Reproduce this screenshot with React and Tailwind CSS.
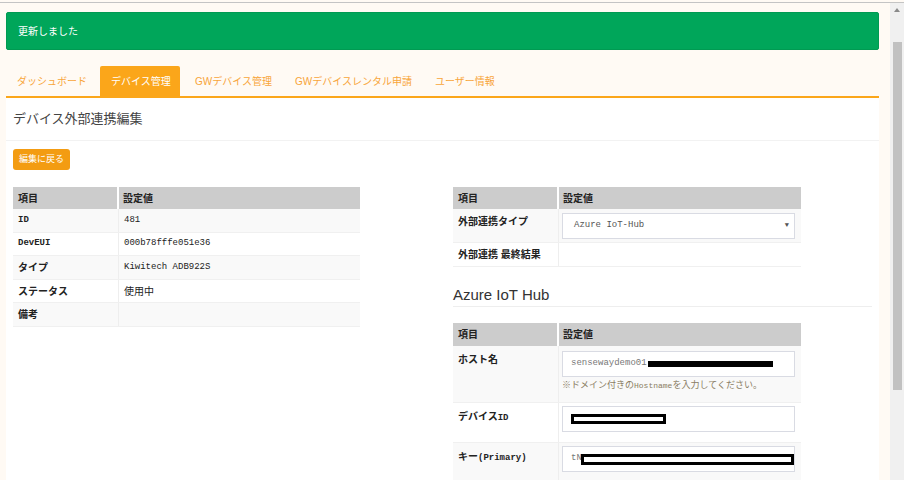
import React from "react";

const jp = "font-['Liberation_Sans','Noto_Sans_CJK_JP',sans-serif]";
const mono = "font-['Liberation_Mono','Noto_Sans_CJK_JP',monospace]";

const tabs = [
  { label: "ダッシュボード", cls: "w-[94px] pl-[11px]" },
  { label: "デバイス管理", cls: "w-[80px] pl-[11px] bg-[#fba61a] text-white rounded-t-[2px]" },
  { label: "GWデバイス管理", cls: "w-[103px] pl-[15px]" },
  { label: "GWデバイスレンタル申請", cls: "w-[140px] pl-[12px]" },
  { label: "ユーザー情報", cls: "pl-[12px]" },
];

// latin runs in a narrow mono face, japanese runs a bit larger
const T = ({ text }) => {
  const parts = text.match(/[\x20-\x7e]+|[^\x20-\x7e]+/g) || [];
  return (
    <>
      {parts.map((p, i) =>
        /^[\x20-\x7e]+$/.test(p) ? (
          <span key={i} className={`${mono} text-[9px]`}>{p}</span>
        ) : (
          <span key={i} className={`${jp} text-[10px]`}>{p}</span>
        )
      )}
    </>
  );
};

const leftRows = [
  ["ID", "481"],
  ["DevEUI", "000b78fffe051e36"],
  ["タイプ", "Kiwitech ADB922S"],
  ["ステータス", "使用中"],
  ["備考", ""],
];

const TableHead = ({ h }) => (
  <div className={`flex ${h} bg-[#cccccc] text-[10px] font-bold text-[#222]`}>
    <div className="flex w-[106px] items-center border-r-2 border-white pl-[5px]">項目</div>
    <div className="flex flex-1 items-center pl-[4px]">設定値</div>
  </div>
);

const Input = ({ children }) => (
  <div className="flex h-[26px] w-[233px] items-center border border-[#d9dbe3] bg-white pl-[8px] text-[#777]">
    {children}
  </div>
);

const App = () => {
  return (
    <div className={`flex h-[480px] w-[904px] flex-col overflow-hidden bg-[#fffaf4] ${jp}`}>
      <div className="h-[2px] shrink-0" />
      <div className="h-px shrink-0 bg-[#c4c4c4]" />
      <div className="flex min-h-0 flex-1">
        <div className="w-[890px] shrink-0 overflow-hidden pl-[6px] pr-[11px]">
          <div className="mt-[9px] flex h-[38px] items-center rounded-[2px] border border-[#009a52] bg-[#00a65a] pl-[11px] text-[10px] text-white">
            更新しました
          </div>

          <div className="mt-[16px] flex h-[32px] items-stretch border-b-2 border-[#fba61a] text-[10px] text-[#f8a53a]">
            {tabs.map((t) => (
              <div key={t.label} className={`flex items-center ${t.cls}`}>{t.label}</div>
            ))}
          </div>

          <div className="h-[400px] bg-white">
            <div className="flex h-[43px] items-center border-b border-[#f2f2f2] pl-[7px] text-[13px] text-[#444]">
              デバイス外部連携編集
            </div>
            <div className="flex pl-[7px] pt-[8px]">
              <button className="h-[21px] w-[57px] rounded-[3px] bg-[#f39c12] text-[9px] text-white">編集に戻る</button>
            </div>

            <div className="mt-[17px] flex pl-[7px]">
              <div className="w-[440px]">
                <div className="w-[347px]">
                  <TableHead h="h-[22px]" />
                  {leftRows.map(([k, v], i) => (
                    <div
                      key={k}
                      className={`flex h-[23.6px] border-b border-[#f0f0f0] text-[#222] ${i % 2 === 0 ? "bg-[#f9f9f9]" : "bg-white"}`}
                    >
                      <div className="flex w-[106px] items-center border-r border-[#eeeeee] pl-[5px] font-bold"><T text={k} /></div>
                      <div className="flex flex-1 items-center pl-[5px]"><T text={v} /></div>
                    </div>
                  ))}
                </div>
              </div>

              <div className="w-[419px]">
                <div className="w-[348px]">
                  <TableHead h="h-[22px]" />
                  <div className="flex h-[34px] border-b border-[#f0f0f0] bg-[#f9f9f9] text-[10px] font-bold text-[#222]">
                    <div className="w-[106px] border-r border-[#eeeeee] pl-[5px] pt-[5px]">外部連携タイプ</div>
                    <div className="flex flex-1 items-center pl-[3px]">
                      <div className={`flex h-[26px] w-[233px] items-center justify-between border border-[#d9dbe3] bg-white pl-[11px] pr-[5px] text-[9px] font-normal text-[#555] ${mono}`}>
                        <span>Azure IoT-Hub</span>
                        <span className="text-[7px] text-[#555]">▼</span>
                      </div>
                    </div>
                  </div>
                  <div className="flex h-[24px] border-b border-[#f0f0f0] bg-white text-[10px] font-bold text-[#222]">
                    <div className="flex w-[106px] items-center border-r border-[#eeeeee] pl-[5px]">外部連携 最終結果</div>
                    <div className="flex-1" />
                  </div>
                </div>

                <div className="mt-[18px] border-b border-[#eeeeee] pb-[1px] text-[15px] leading-[20px] text-[#333]">
                  Azure IoT Hub
                </div>

                <div className="mt-[16px] w-[348px]">
                  <TableHead h="h-[23px]" />
                  <div className="flex h-[57px] border-b border-[#f0f0f0] bg-[#f9f9f9] text-[#222]">
                    <div className="w-[106px] border-r border-[#eeeeee] pl-[5px] pt-[5px] font-bold leading-[14px]"><T text="ホスト名" /></div>
                    <div className="flex-1 pl-[3px] pt-[5px]">
                      <Input>
                        <span className={`${mono} text-[9px]`}>sensewaydemo01</span>
                        <span className="ml-[1px] h-[6px] w-[125px] bg-black" />
                      </Input>
                      <div className="leading-[12px] text-[#8a7d63]">
                        <span className="text-[9px]">※ドメイン付きの</span>
                        <span className={`${mono} text-[8px]`}>Hostname</span>
                        <span className="text-[9px]">を入力してください。</span>
                      </div>
                    </div>
                  </div>
                  <div className="flex h-[40px] border-b border-[#f0f0f0] bg-white text-[#222]">
                    <div className="w-[106px] border-r border-[#eeeeee] pl-[5px] pt-[5px] font-bold leading-[14px]"><T text="デバイスID" /></div>
                    <div className="flex-1 pl-[3px] pt-[3px]">
                      <Input>
                        <span className="h-[10px] w-[95px] border-[3px] border-black bg-white" />
                      </Input>
                    </div>
                  </div>
                  <div className="flex h-[40px] bg-[#f9f9f9] text-[#222]">
                    <div className="w-[106px] border-r border-[#eeeeee] pl-[5px] pt-[5px] font-bold leading-[14px]"><T text="キー(Primary)" /></div>
                    <div className="flex-1 pl-[3px] pt-[3px]">
                      <Input>
                        <span className={`${mono} text-[9px]`}>tN</span>
                        <span className="ml-[-1px] h-[11px] w-[214px] border-[3px] border-black bg-white" />
                      </Input>
                    </div>
                  </div>
                </div>
              </div>
            </div>
          </div>
        </div>

        <div className="flex w-[14px] flex-col items-center bg-[#f0f0f0]">
          <div className="mt-[5px] h-0 w-0 border-x-[3px] border-b-[4px] border-x-transparent border-b-[#8a8a8a]" />
          <div className="mt-[30px] h-[348px] w-[9px] bg-[#c1c1c1]" />
        </div>
      </div>
    </div>
  );
};

export default App;
